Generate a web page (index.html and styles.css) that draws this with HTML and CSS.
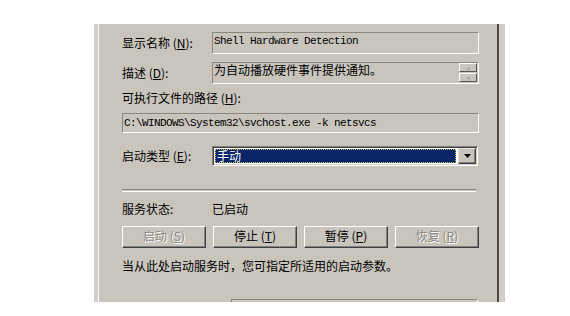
FILE: index.html
```html
<!DOCTYPE html>
<html lang="zh-CN">
<head>
    <meta charset="UTF-8">
    <title>服务属性</title>
    <link rel="stylesheet" href="styles.css">
</head>
<body>
    <div class="dialog">
        <div class="page">
            <div class="row first">
                <span class="label">显示名称 (<u>N</u>):</span>
                <div class="field mono">Shell Hardware Detection</div>
            </div>
            <div class="row desc-row">
                <span class="label">描述 (<u>D</u>):</span>
                <div class="field desc">
                    <span class="desc-text">为自动播放硬件事件提供通知。</span>
                    <div class="spin">
                        <div class="spin-btn">&#9652;</div>
                        <div class="spin-btn">&#9662;</div>
                    </div>
                </div>
            </div>
            <div class="line path-label">可执行文件的路径 (<u>H</u>):</div>
            <div class="field mono path">C:\WINDOWS\System32\svchost.exe -k netsvcs</div>
            <div class="row combo-row">
                <span class="label">启动类型 (<u>E</u>):</span>
                <div class="combo">
                    <div class="combo-value"><span>手动</span></div>
                    <div class="combo-btn">
                        <svg width="7" height="4" viewBox="0 0 7 4"><path d="M0 0h7L3.5 4z" fill="#000"/></svg>
                    </div>
                </div>
            </div>
            <div class="separator"></div>
            <div class="line status">
                <span class="label">服务状态:</span>
                <span>已启动</span>
            </div>
            <div class="buttons">
                <div class="btn disabled">启动 (<u>S</u>)</div>
                <div class="btn">停止 (<u>T</u>)</div>
                <div class="btn">暂停 (<u>P</u>)</div>
                <div class="btn disabled">恢复 (<u>R</u>)</div>
            </div>
            <div class="line hint">当从此处启动服务时，您可指定所适用的启动参数。</div>
            <div class="field params"></div>
        </div>
    </div>
</body>
</html>
```

FILE: styles.css
```css
body {
    margin: 0;
    background: #fff;
    font-family: "Noto Sans CJK SC", "Noto Sans", sans-serif;
    font-size: 12px;
    color: #000;
}

.dialog {
    margin: 24px 0 0 94px;
    width: 411px;
    height: 278px;
    background: #d2cfc8;
    overflow: hidden;
    display: flex;
}

.page {
    box-sizing: border-box;
    margin-left: 4px;
    width: 401px;
    height: 100%;
    background: #c9c5bd;
    border-left: 1px solid #fff;
    border-right: 2px solid #4a4a4a;
    padding: 8px 18px 0 23px;
}

u {
    text-decoration: underline;
    text-underline-offset: 1px;
}

.row {
    display: flex;
    align-items: center;
    height: 22px;
}

.label {
    width: 90px;
    flex-shrink: 0;
    line-height: 14px;
}

.field {
    box-sizing: border-box;
    border-top: 1px solid #8a8780;
    border-left: 1px solid #8a8780;
    border-bottom: 1px solid #fff;
    border-right: 1px solid #fff;
    background: #c9c5bd;
}

.mono {
    font-family: "Liberation Mono", "DejaVu Sans Mono", monospace;
    font-size: 11px;
    letter-spacing: -0.6px;
    padding-left: 1px;
    white-space: nowrap;
}

.row .field {
    flex: 1;
    height: 22px;
}

.row .field.mono {
    line-height: 14px;
    padding-top: 1px;
}

.desc-row {
    margin-top: 8px;
}

.field.desc {
    display: flex;
    justify-content: space-between;
}

.desc-text {
    line-height: 14px;
    padding-left: 1px;
}

.spin {
    display: flex;
    flex-direction: column;
    justify-content: space-between;
    padding: 0 1px 1px 0;
    width: 18px;
}

.spin-btn {
    box-sizing: border-box;
    height: 9px;
    border-top: 1px solid #fff;
    border-left: 1px solid #fff;
    border-right: 1px solid #555;
    border-bottom: 1px solid #555;
    font-size: 6px;
    line-height: 7px;
    text-align: center;
    color: #a09d96;
}

.line {
    line-height: 14px;
    display: flex;
}

.path-label {
    margin-top: 7px;
}

.field.path {
    margin-top: 8px;
    height: 20px;
    line-height: 18px;
}

.combo-row {
    margin-top: 13px;
    height: 20px;
}

.combo {
    flex: 1;
    box-sizing: border-box;
    height: 20px;
    display: flex;
    padding: 1px;
    background: #fff;
    border-top: 1px solid #808080;
    border-left: 1px solid #808080;
    border-bottom: 1px solid #fff;
    border-right: 1px solid #fff;
    box-shadow: inset 1px 1px 0 #404040, inset -1px -1px 0 #d4d0c8;
    margin-right: 1px;
}

.combo-value {
    flex: 1;
    background: #0a246a;
    color: #fff;
    outline: 1px dotted #c8c060;
    outline-offset: -1px;
    line-height: 14px;
    padding-left: 2px;
    margin: 1px 2px 1px 1px;
}

.combo-btn {
    box-sizing: border-box;
    width: 18px;
    display: flex;
    align-items: center;
    justify-content: center;
    background: #c9c5bd;
    border-top: 1px solid #e4e1da;
    border-left: 1px solid #e4e1da;
    border-right: 1px solid #404040;
    border-bottom: 1px solid #404040;
    box-shadow: inset -1px -1px 0 #808080;
    margin: 0 0 0 0;
}

.separator {
    margin-top: 23px;
    width: 354px;
    height: 1px;
    border-top: 1px solid #8a8780;
    border-bottom: 1px solid #fff;
}

.status {
    margin-top: 10px;
}

.buttons {
    margin-top: 10px;
    display: flex;
    gap: 7px;
}

.btn {
    box-sizing: border-box;
    width: 84px;
    height: 22px;
    line-height: 18px;
    text-align: center;
    border-top: 1px solid #fff;
    border-left: 1px solid #fff;
    border-right: 1px solid #404040;
    border-bottom: 1px solid #404040;
    box-shadow: inset -1px -1px 0 #808080;
}

.btn.disabled {
    color: #8a8780;
    text-shadow: 1px 1px 0 #fff;
}

.hint {
    margin-top: 11px;
}

.field.params {
    margin: 26px 0 0 109px;
    width: 247px;
    height: 20px;
}
```
